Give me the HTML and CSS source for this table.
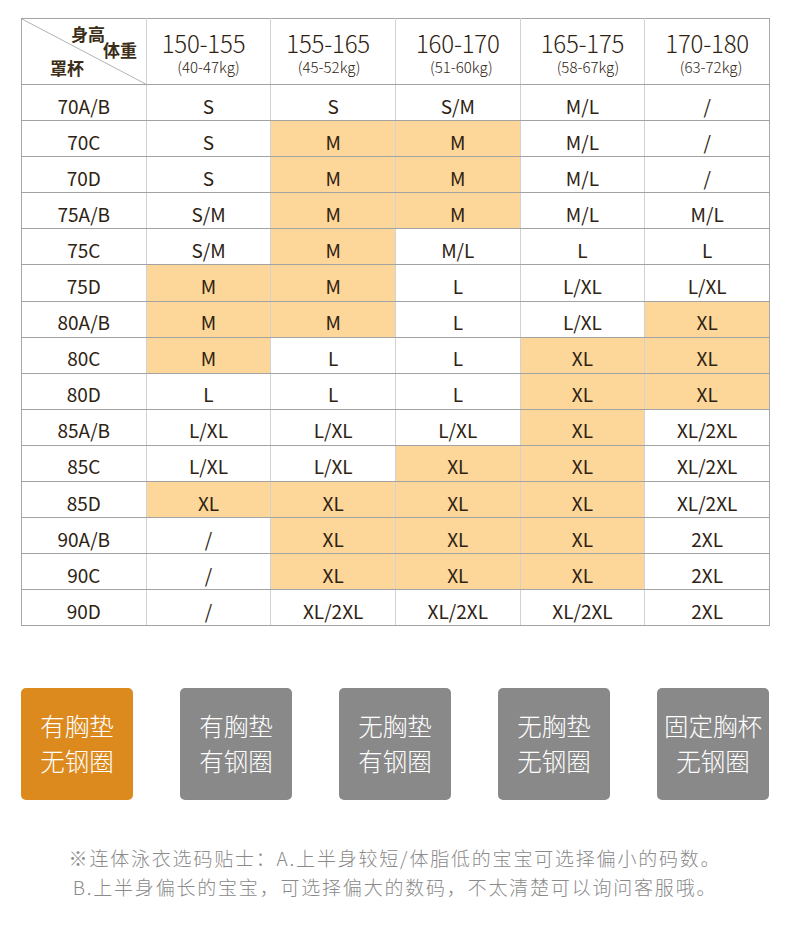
FILE: index.html
```html
<!DOCTYPE html>
<html lang="zh-CN">
<head>
<meta charset="utf-8">
<title>尺码表</title>
<link rel="stylesheet" href="styles.css">
</head>
<body>
<div class="page">
  <table class="size-table">
    <colgroup>
      <col class="c0"><col><col><col><col><col>
    </colgroup>
    <thead>
      <tr>
        <th class="corner">
          <svg class="diag" viewBox="0 0 100 100" preserveAspectRatio="none"><line x1="0" y1="0" x2="100" y2="100" stroke="#b3b3b3" stroke-width="1" vector-effect="non-scaling-stroke"/></svg>
          <span class="lbl l1">身高</span>
          <span class="lbl l2">体重</span>
          <span class="lbl l3">罩杯</span>
        </th>
        <th><div class="rng left">150-155</div><div class="kg">(40-47kg)</div></th>
        <th><div class="rng left">155-165</div><div class="kg k2">(45-52kg)</div></th>
        <th><div class="rng">160-170</div><div class="kg k3">(51-60kg)</div></th>
        <th><div class="rng">165-175</div><div class="kg k4">(58-67kg)</div></th>
        <th><div class="rng">170-180</div><div class="kg k5">(63-72kg)</div></th>
      </tr>
    </thead>
    <tbody>
      <tr><td>70A/B</td><td>S</td><td>S</td><td>S/M</td><td>M/L</td><td>/</td></tr>
      <tr><td>70C</td><td>S</td><td class="hl">M</td><td class="hl">M</td><td>M/L</td><td>/</td></tr>
      <tr><td>70D</td><td>S</td><td class="hl">M</td><td class="hl">M</td><td>M/L</td><td>/</td></tr>
      <tr><td>75A/B</td><td>S/M</td><td class="hl">M</td><td class="hl">M</td><td>M/L</td><td>M/L</td></tr>
      <tr><td>75C</td><td>S/M</td><td class="hl">M</td><td>M/L</td><td>L</td><td>L</td></tr>
      <tr><td>75D</td><td class="hl">M</td><td class="hl">M</td><td>L</td><td>L/XL</td><td>L/XL</td></tr>
      <tr><td>80A/B</td><td class="hl">M</td><td class="hl">M</td><td>L</td><td>L/XL</td><td class="hl">XL</td></tr>
      <tr><td>80C</td><td class="hl">M</td><td>L</td><td>L</td><td class="hl">XL</td><td class="hl">XL</td></tr>
      <tr><td>80D</td><td>L</td><td>L</td><td>L</td><td class="hl">XL</td><td class="hl">XL</td></tr>
      <tr><td>85A/B</td><td>L/XL</td><td>L/XL</td><td>L/XL</td><td class="hl">XL</td><td>XL/2XL</td></tr>
      <tr><td>85C</td><td>L/XL</td><td>L/XL</td><td class="hl">XL</td><td class="hl">XL</td><td>XL/2XL</td></tr>
      <tr><td>85D</td><td class="hl">XL</td><td class="hl">XL</td><td class="hl">XL</td><td class="hl">XL</td><td>XL/2XL</td></tr>
      <tr><td>90A/B</td><td>/</td><td class="hl">XL</td><td class="hl">XL</td><td class="hl">XL</td><td>2XL</td></tr>
      <tr><td>90C</td><td>/</td><td class="hl">XL</td><td class="hl">XL</td><td class="hl">XL</td><td>2XL</td></tr>
      <tr><td>90D</td><td>/</td><td>XL/2XL</td><td>XL/2XL</td><td>XL/2XL</td><td>2XL</td></tr>
    </tbody>
  </table>

  <div class="types">
    <div class="type active">有胸垫<br>无钢圈</div>
    <div class="type">有胸垫<br>有钢圈</div>
    <div class="type">无胸垫<br>有钢圈</div>
    <div class="type">无胸垫<br>无钢圈</div>
    <div class="type">固定胸杯<br>无钢圈</div>
  </div>

  <div class="tips">
    <p>※连体泳衣选码贴士：A.上半身较短/体脂低的宝宝可选择偏小的码数。</p>
    <p>B.上半身偏长的宝宝，可选择偏大的数码，不太清楚可以询问客服哦。</p>
  </div>
</div>
</body>
</html>
```

FILE: styles.css
```css
* { box-sizing: border-box; }
html, body {
  margin: 0;
  padding: 0;
  background: #fff;
}
body {
  font-family: "Noto Sans CJK SC", "Noto Sans", sans-serif;
  color: #2e2212;
}
.page {
  width: 790px;
  padding: 18px 21px 0 21px;
}
.size-table {
  width: 749px;
  border-collapse: collapse;
  table-layout: fixed;
  border: 1px solid #a8a8a8;
}
.size-table th,
.size-table td {
  border-left: 1px solid #d2d2d2;
  border-right: 1px solid #d2d2d2;
  border-top: 1px solid #a3a3a3;
  border-bottom: 1px solid #a3a3a3;
  text-align: center;
  padding: 0;
}
.size-table tr > :first-child { border-left: 1px solid #a8a8a8; }
.size-table tr > :last-child { border-right: 1px solid #a8a8a8; }
.size-table thead th {
  height: 66px;
  font-weight: 300;
  vertical-align: middle;
  padding-top: 3px;
}
.rng {
  font-size: 24px;
  line-height: 28px;
  font-weight: 300;
  letter-spacing: -0.2px;
  color: #2e2212;
}
.rng.left { padding-right: 10px; }
.kg {
  font-size: 15px;
  line-height: 20px;
  margin-top: 0;
  font-weight: 300;
  color: #2e2212;
}
.kg.k2 { padding-right: 8px; }
.kg.k3 { padding-left: 7px; }
.kg.k4 { padding-left: 11px; }
.kg.k5 { padding-left: 8px; }
.size-table td {
  height: 36.1px;
  font-size: 19px;
  line-height: 20px;
  padding-top: 6px;
}
.size-table td.hl { background: #fdd699; }
.size-table thead th.corner {
  position: relative;
  padding: 0;
}
.diag {
  position: absolute;
  left: 0;
  top: 0;
  width: 100%;
  height: 100%;
  display: block;
}
.lbl {
  position: absolute;
  font-size: 17px;
  line-height: 17px;
  font-weight: 700;
  color: #3b2d17;
}
.l1 { left: 49px; top: 5.5px; }
.l2 { left: 81px; top: 21.5px; }
.l3 { left: 28px; top: 39.5px; }

.types {
  display: flex;
  justify-content: space-between;
  width: 748px;
  margin-top: 62px;
}
.type {
  width: 112px;
  height: 112px;
  border-radius: 5px;
  background: #898989;
  color: #fff;
  font-size: 24.5px;
  font-weight: 300;
  line-height: 35px;
  display: flex;
  align-items: center;
  justify-content: center;
  text-align: center;
  padding-bottom: 3px;
}
.type.active { background: #dc8a1e; }

.tips {
  width: 748px;
  margin-top: 43px;
  text-align: center;
  color: #8a8a8a;
  font-size: 19px;
  font-weight: 300;
  line-height: 29px;
  letter-spacing: 1.8px;
}
.tips p { margin: 0; }
```
